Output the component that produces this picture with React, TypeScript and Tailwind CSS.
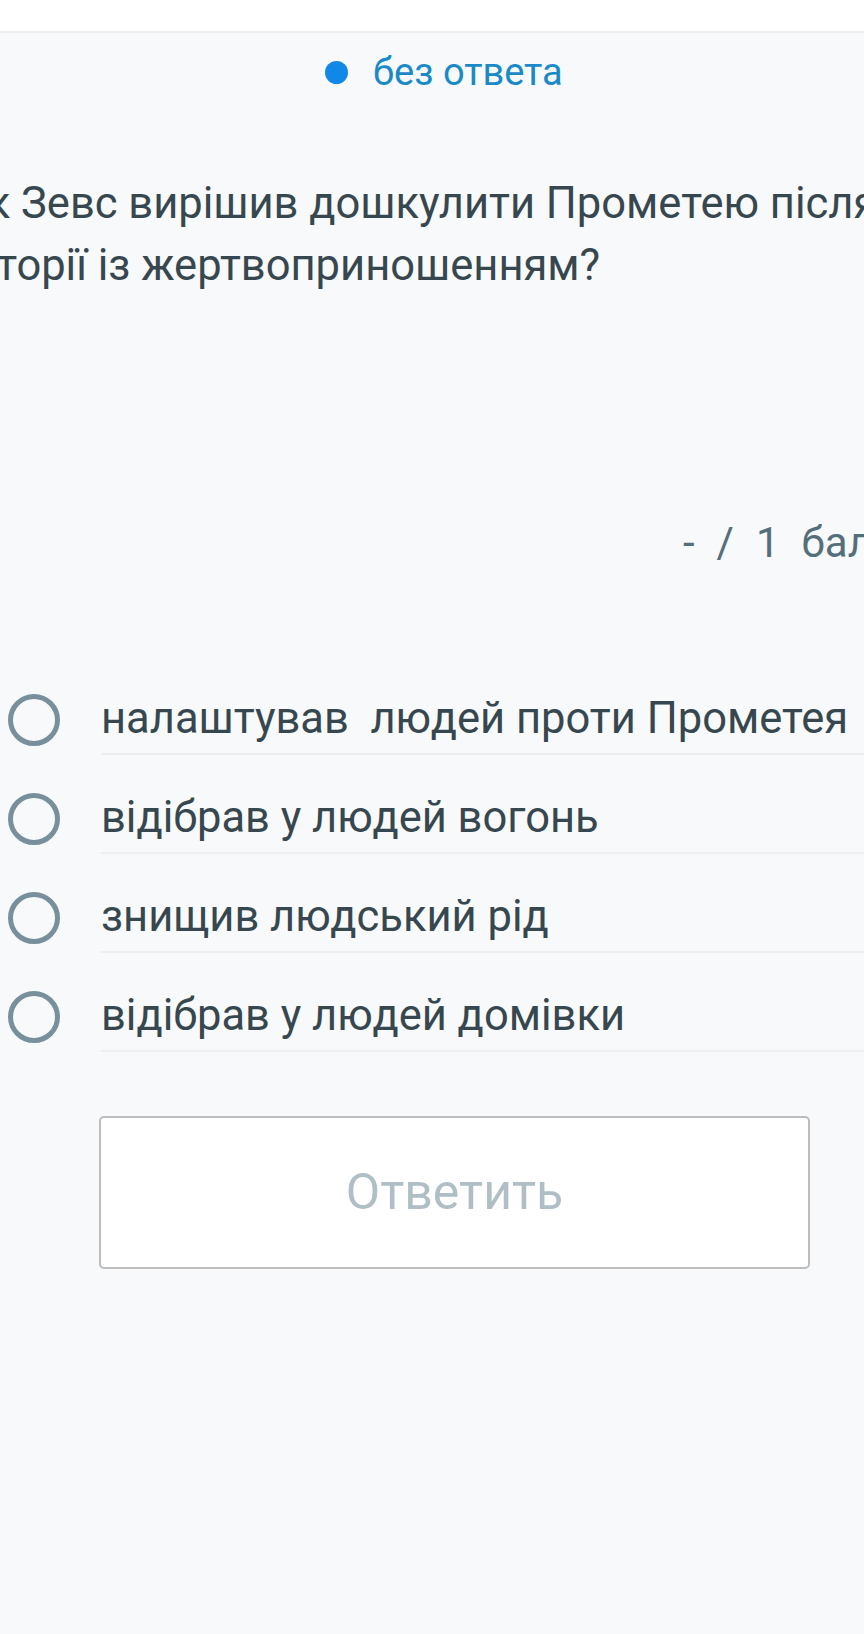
import React from "react";

const options = [
  "налаштував  людей проти Прометея",
  "відібрав у людей вогонь",
  "знищив людський рід",
  "відібрав у людей домівки",
];

const App = () => {
  return (
    <div
      className="w-[864px] h-[1634px] overflow-hidden bg-[#f7f9fa] text-[#37474f]"
      style={{ fontFamily: "Roboto, 'Noto Sans', sans-serif" }}
    >
      <div className="h-[33px] bg-white border-b-2 border-[#eceff1]" />

      {/* status */}
      <div className="flex items-center h-[78px] pl-[325px] gap-[25px]">
        <span className="w-[23px] h-[23px] rounded-full bg-[#1188e6]" />
        <span className="text-[38px] text-[#1a8ac6] leading-none">без ответа</span>
      </div>

      {/* question */}
      <div className="mt-[62px] ml-[-41px] text-[43.5px] leading-[62px] whitespace-nowrap">
        <div>Як Зевс вирішив дошкулити Прометею після</div>
        <div className="ml-[4px]">історії із жертвоприношенням?</div>
      </div>

      {/* score */}
      <div className="mt-[225px] flex items-center gap-[22px] pl-[683px] text-[42px] text-[#546e7a] leading-none whitespace-nowrap">
        <span>-</span>
        <span>/</span>
        <span>1</span>
        <span>балл</span>
      </div>

      {/* options */}
      <div className="mt-[92px] flex flex-col">
        {options.map((opt, i) => (
          <div key={i} className="flex h-[99px]">
            <div className="w-[101px] flex items-center pt-[29px] pl-[8px]">
              <span className="w-[52px] h-[52px] rounded-full border-[5px] border-[#78909c]" />
            </div>
            <div className="flex-1 flex items-center pt-[29px] border-b-2 border-[#eceff1]">
              <span className="text-[43.5px] whitespace-pre leading-none">{opt}</span>
            </div>
          </div>
        ))}
      </div>

      {/* button */}
      <div className="mt-[64px] pl-[99px]">
        <button className="w-[711px] h-[153px] bg-white border-2 border-[#bdbdbd] rounded-[5px] text-[50px] text-[#b0bec5]">
          Ответить
        </button>
      </div>
    </div>
  );
};

export default App;
